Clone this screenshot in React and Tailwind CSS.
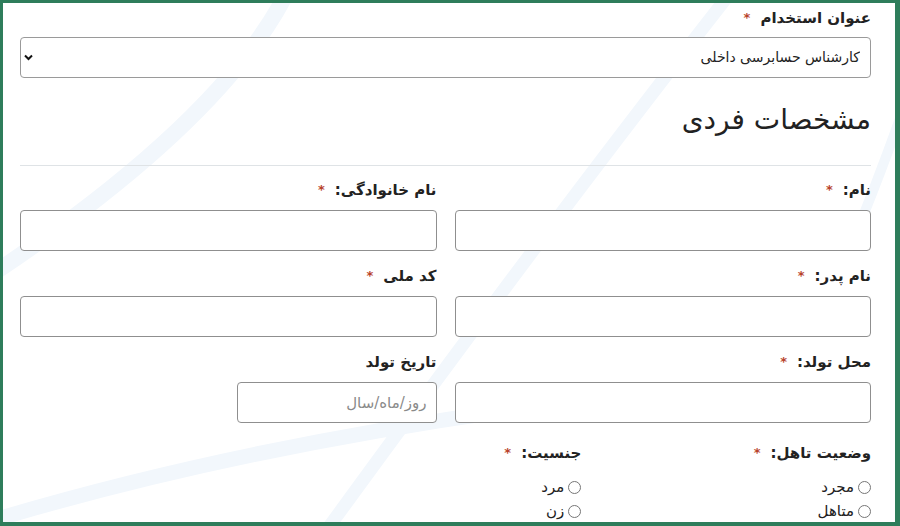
import React from "react";

const Star = () => <span className="text-[#b8432b] text-[13px] font-bold mr-[10px]">*</span>;

const Label = ({ children, required }) => (
    <div className="h-[24px] leading-[24px] text-[15px] font-bold text-[#222] flex items-center">
        <span>{children}</span>
        {required && <Star />}
    </div>
);

const TextField = ({ label, required, narrow, placeholder }) => (
    <div className="flex flex-col">
        <Label required={required}>{label}</Label>
        <input
            type="text"
            placeholder={placeholder}
            className={`mt-[8px] h-[41px] bg-white border border-[#8f8f8f] rounded-[4px] px-[9px] text-[15px] placeholder:text-[#8a8a8a] outline-none ${narrow ? "w-[200px]" : "w-full"}`}
        />
    </div>
);

const Radio = ({ name, label }) => (
    <label className="flex items-center gap-[4px] h-[24px] text-[15px] text-[#222]">
        <input type="radio" name={name} className="m-0 w-[13px] h-[13px]" />
        <span>{label}</span>
    </label>
);

// faint background decoration
const Swooshes = () => (
    <svg className="absolute inset-0 w-full h-full pointer-events-none" viewBox="0 0 893 519" preserveAspectRatio="none">
        <g fill="none" stroke="#f2f7fc" strokeLinecap="round">
            <path d="M 282 -6 Q 215 120 -6 268" strokeWidth="16" />
            <path d="M 725 -6 Q 540 230 300 560" strokeWidth="13" />
            <path d="M -6 516 Q 250 440 560 400" strokeWidth="15" />
            <path d="M 900 110 Q 875 180 850 240" strokeWidth="10" />
        </g>
    </svg>
);

export default function App() {
    return (
        <div
            dir="rtl"
            className="relative w-[900px] h-[526px] overflow-hidden bg-white border-[#2e7d5b] border-t-[3px] border-l-[3px] border-r-[5px] border-b-[4px]"
            style={{ fontFamily: '"DejaVu Sans", "Noto Sans", sans-serif' }}
        >
            <Swooshes />
            <div className="relative pl-[17px] pr-[24px] pt-[3px]">
                {/* Job title */}
                <Label required>عنوان استخدام</Label>
                <div className="relative mt-[7px]">
                    <select className="appearance-none w-full h-[41px] bg-white border border-[#9a9a9a] rounded-[4px] pr-[10px] pl-[24px] text-[14px] text-[#222] outline-none">
                        <option>کارشناس حسابرسی داخلی</option>
                    </select>
                    <svg className="absolute left-[4px] top-[17px]" width="9" height="7" viewBox="0 0 9 7">
                        <path d="M1 1.5 L4.5 5 L8 1.5" fill="none" stroke="#111" strokeWidth="2" />
                    </svg>
                </div>

                {/* Section heading */}
                <h2 className="mt-[22px] h-[40px] leading-[40px] text-[28px] text-[#222]">مشخصات فردی</h2>
                <div className="mt-[25px] border-t border-[#dfe3e6]" />

                {/* Personal fields */}
                <div className="mt-[12px] grid grid-cols-2 gap-x-[18px] gap-y-[13px]">
                    <TextField label="نام:" required />
                    <TextField label="نام خانوادگی:" required />
                    <TextField label="نام پدر:" required />
                    <TextField label="کد ملی" required />
                    <TextField label="محل تولد:" required />
                    <TextField label="تاریخ تولد" narrow placeholder="روز/ماه/سال" />
                </div>

                {/* Radios */}
                <div className="mt-[18px] grid grid-cols-3 gap-x-[18px]">
                    <div>
                        <Label required>وضعیت تاهل:</Label>
                        <div className="mt-[10px] flex flex-col">
                            <Radio name="marital" label="مجرد" />
                            <Radio name="marital" label="متاهل" />
                        </div>
                    </div>
                    <div>
                        <Label required>جنسیت:</Label>
                        <div className="mt-[10px] flex flex-col">
                            <Radio name="gender" label="مرد" />
                            <Radio name="gender" label="زن" />
                        </div>
                    </div>
                </div>
            </div>
        </div>
    );
}
